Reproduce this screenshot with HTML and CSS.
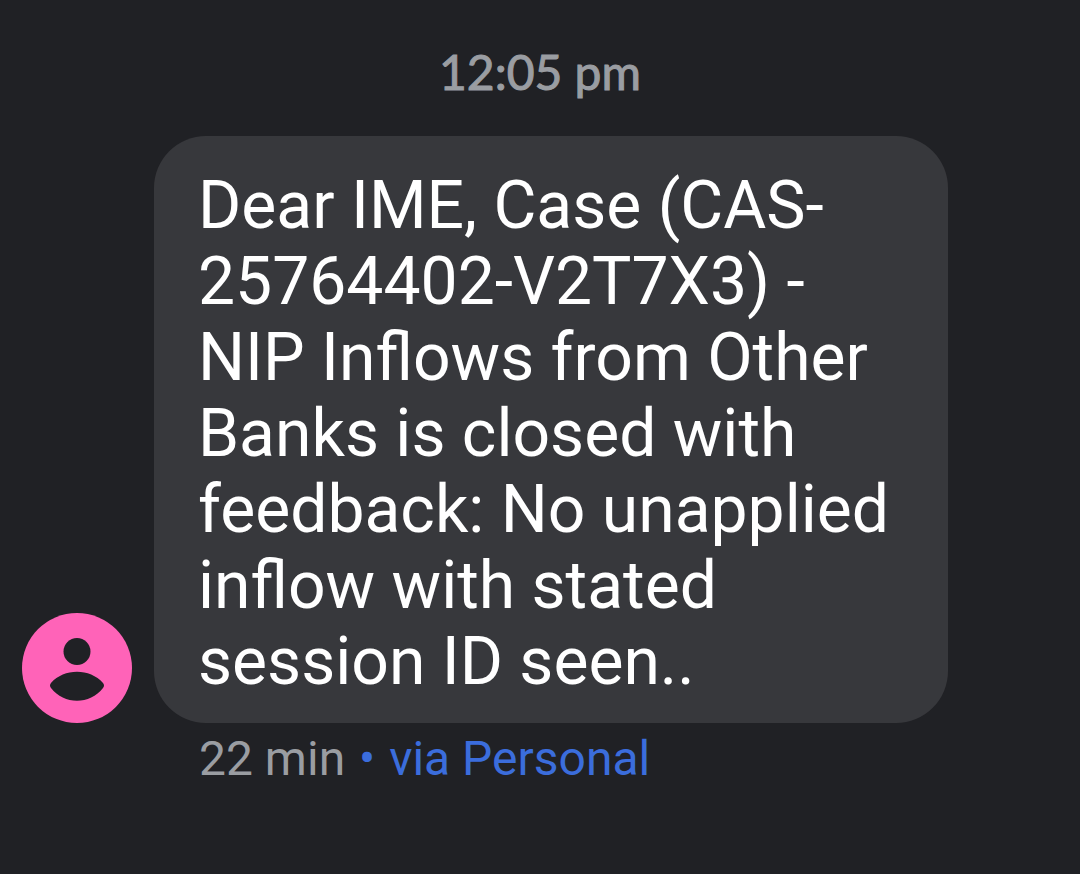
FILE: index.html
```html
<!DOCTYPE html>
<html lang="en">
<head>
    <meta charset="UTF-8">
    <meta name="viewport" content="width=device-width, initial-scale=1.0">
    <title>Messages</title>
    <link rel="stylesheet" href="styles.css">
</head>
<body>
    <main class="thread">
        <time class="timestamp" datetime="12:05">12:05 pm</time>

        <div class="message">
            <svg class="avatar" viewBox="0 0 110 110" role="img" aria-label="Contact">
                <circle cx="55" cy="55" r="55" fill="#ff63b8"/>
                <circle cx="55" cy="38.5" r="13.5" fill="#202125"/>
                <path d="M29 70C42 55 68 55 81 70Q83 72.500 81 75C68 92 42 92 29 75Q27 72.500 29 70Z" fill="#202125"/>
            </svg>
            <p class="bubble">Dear IME, Case (CAS-25764402-V2T7X3) - NIP Inflows from Other Banks is closed with feedback: No unapplied inflow with stated session ID seen..</p>
        </div>

        <div class="meta">22 min <span class="sim"><span class="dot">•</span> via Personal</span></div>
    </main>
</body>
</html>
```
FILE: styles.css
```css
body {
    margin: 0;
    background-color: #202125;
    color: #fff;
    font-family: Roboto, sans-serif;
}

.thread {
    display: flex;
    flex-direction: column;
    padding: 42px 132px 44px 22px;
}

.timestamp {
    margin-left: 110px;
    text-align: center;
    font-family: Lato, sans-serif;
    font-size: 48px;
    line-height: 60px;
    color: #9a9da2;
    -webkit-text-stroke: 1px #9a9da2; /* medium weight */
}

.message {
    display: flex;
    align-items: flex-end;
    gap: 22px;
    margin-top: 34px;
}

.avatar {
    flex: none;
    width: 110px;
    height: 110px;
}

.bubble {
    flex: 1;
    margin: 0;
    padding: 32px 44px 23px;
    border-radius: 52px;
    background-color: #37383c;
    font-size: 66px;
    line-height: 76px;
}

.meta {
    margin: 8px 0 0 177px;
    font-size: 48px;
    line-height: 56px;
    color: #9a9da2;
}

.sim {
    color: #3b6ddc;
}

.dot {
    margin: 0 2px;
}
```
